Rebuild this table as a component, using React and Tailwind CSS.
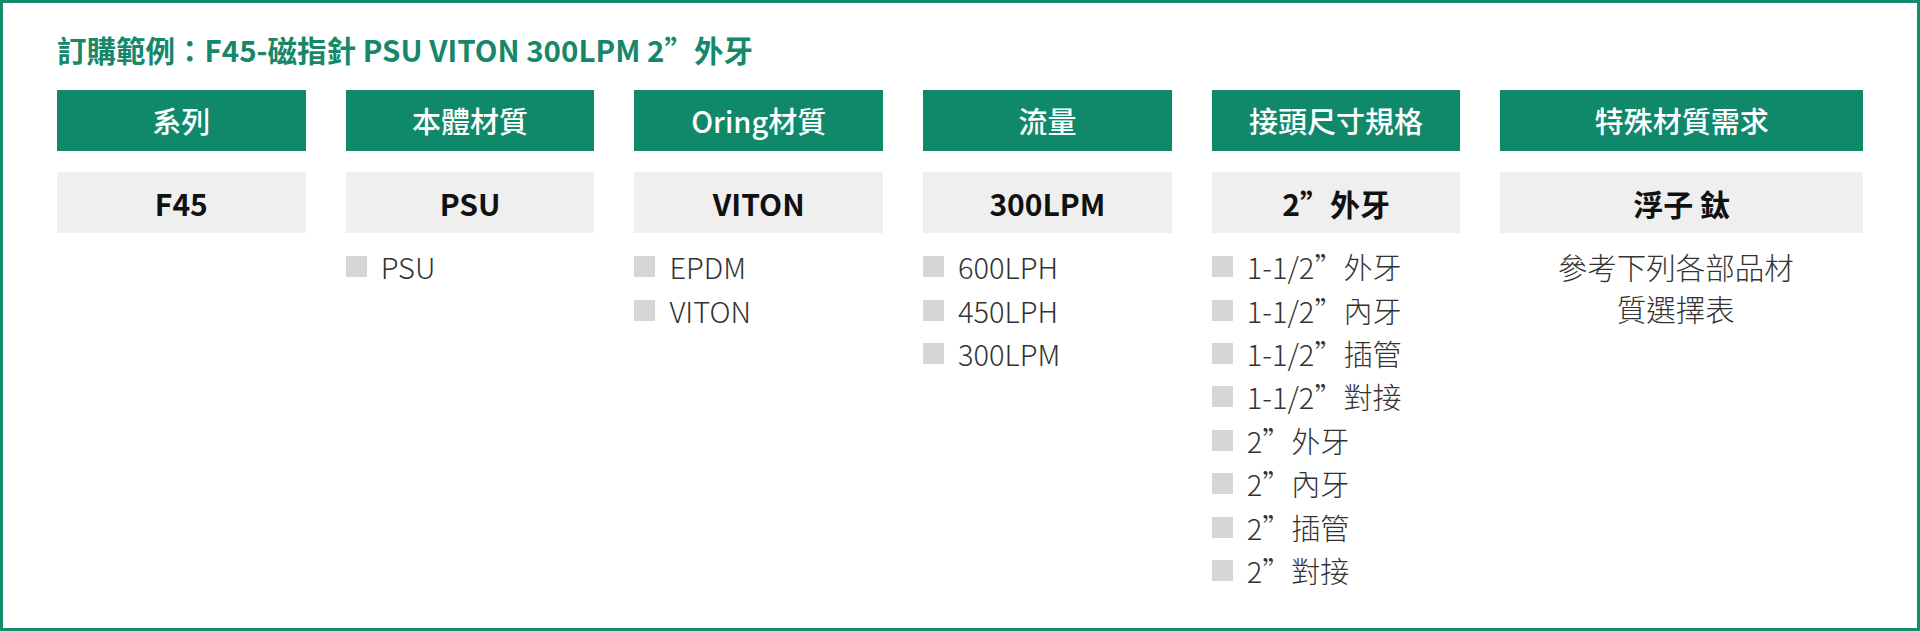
import React from "react";

const columns = [
  { title: "系列", value: "F45", items: [] },
  { title: "本體材質", value: "PSU", items: ["PSU"] },
  { title: "Oring材質", value: "VITON", items: ["EPDM", "VITON"] },
  { title: "流量", value: "300LPM", items: ["600LPH", "450LPH", "300LPM"] },
  {
    title: "接頭尺寸規格",
    value: "2”外牙",
    items: [
      "1-1/2”外牙",
      "1-1/2”內牙",
      "1-1/2”插管",
      "1-1/2”對接",
      "2”外牙",
      "2”內牙",
      "2”插管",
      "2”對接",
    ],
  },
];

const font = {
  fontFamily: '"Noto Sans CJK TC", "Noto Sans", sans-serif',
};

function Column({ title, value, children }) {
  return (
    <div className="flex flex-col">
      <div className="h-[61px] bg-[#10896b] text-white text-[29px] font-medium leading-none flex items-center justify-center">
        {title}
      </div>
      <div className="mt-[21px] h-[61px] bg-[#efefef] text-[#111] text-[30px] font-bold leading-none flex items-center justify-center">
        {value}
      </div>
      {children}
    </div>
  );
}

export default function App() {
  return (
    <div
      style={font}
      className="w-[1920px] h-[631px] bg-white border-[3px] border-[#168a6c] px-[54px] pt-[26px] box-border"
    >
      <h1 className="text-[29.5px] leading-[40px] font-bold text-[#17876a]">
        訂購範例：F45-磁指針 PSU VITON 300LPM 2”外牙
      </h1>
      <div className="mt-[21px] grid grid-cols-[249fr_249fr_249fr_249fr_249fr_363fr] gap-x-[40px]">
        {columns.map((c) => (
          <Column key={c.title} title={c.title} value={c.value}>
            <ul className="mt-[12px] flex flex-col">
              {c.items.map((it) => (
                <li
                  key={it}
                  className="h-[43.4px] flex items-center text-[29px] font-light text-[#333] leading-none"
                >
                  <span className="w-[21px] h-[21px] bg-[#d6d6d6] mr-[14px] shrink-0" />
                  <span>{it}</span>
                </li>
              ))}
            </ul>
          </Column>
        ))}
        <Column title="特殊材質需求" value="浮子 鈦">
          <p className="mt-[12px] pr-[12px] text-center text-[29.5px] font-light text-[#333] leading-[42px]">
            參考下列各部品材
            <br />
            質選擇表
          </p>
        </Column>
      </div>
    </div>
  );
}
